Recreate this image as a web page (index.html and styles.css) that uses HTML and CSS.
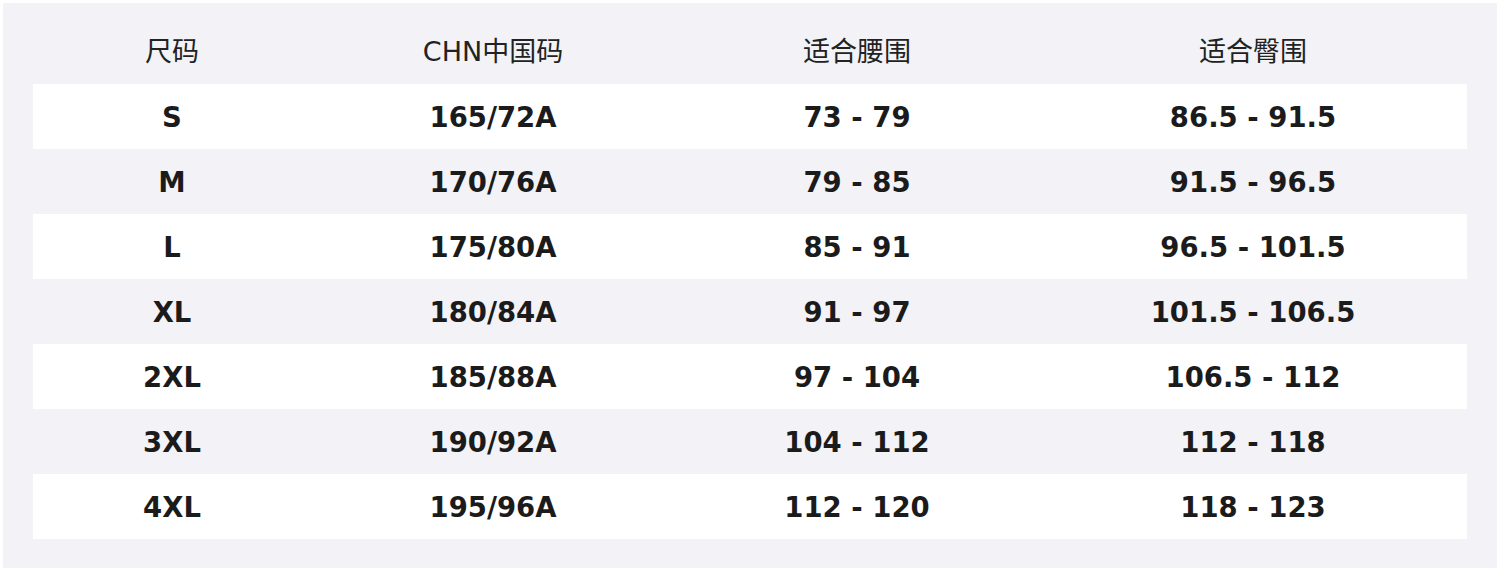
FILE: index.html
```html
<!DOCTYPE html>
<html lang="zh">
<head>
<meta charset="utf-8">
<link rel="stylesheet" href="styles.css">
</head>
<body>
<div class="panel">
  <table class="chart">
    <colgroup>
      <col class="c1"><col class="c2"><col class="c3"><col class="c4">
    </colgroup>
    <thead>
      <tr class="head"><th>尺码</th><th>CHN中国码</th><th>适合腰围</th><th>适合臀围</th></tr>
    </thead>
    <tbody>
      <tr class="white"><td>S</td><td>165/72A</td><td>73 - 79</td><td>86.5 - 91.5</td></tr>
      <tr><td>M</td><td>170/76A</td><td>79 - 85</td><td>91.5 - 96.5</td></tr>
      <tr class="white"><td>L</td><td>175/80A</td><td>85 - 91</td><td>96.5 - 101.5</td></tr>
      <tr><td>XL</td><td>180/84A</td><td>91 - 97</td><td>101.5 - 106.5</td></tr>
      <tr class="white"><td>2XL</td><td>185/88A</td><td>97 - 104</td><td>106.5 - 112</td></tr>
      <tr><td>3XL</td><td>190/92A</td><td>104 - 112</td><td>112 - 118</td></tr>
      <tr class="white"><td>4XL</td><td>195/96A</td><td>112 - 120</td><td>118 - 123</td></tr>
    </tbody>
  </table>
</div>
</body>
</html>
```
FILE: styles.css
```css
html, body {
  margin: 0;
  padding: 0;
  background: #ffffff;
}
body {
  padding: 3px 3px 0 3px;
}
.panel {
  background: #f2f2f7;
  height: 565px;
  box-sizing: border-box;
  padding: 16px 30px 29px 30px;
}
.chart {
  width: 1434px;
  border-collapse: collapse;
  table-layout: fixed;
  font-family: "DejaVu Sans", "Noto Sans CJK SC", sans-serif;
}
.c1 { width: 278px; }
.c2 { width: 364px; }
.c3 { width: 364px; }
.c4 { width: 428px; }
.chart th, .chart td {
  height: 65px;
  padding: 0;
  text-align: center;
  vertical-align: middle;
}
.chart th {
  font-weight: normal;
  font-size: 27px;
  color: #222222;
  padding-bottom: 4px;
  box-sizing: border-box;
}
.chart td {
  font-weight: bold;
  font-size: 27.5px;
  color: #1b1b1b;
}
.white {
  background: #ffffff;
}
```
